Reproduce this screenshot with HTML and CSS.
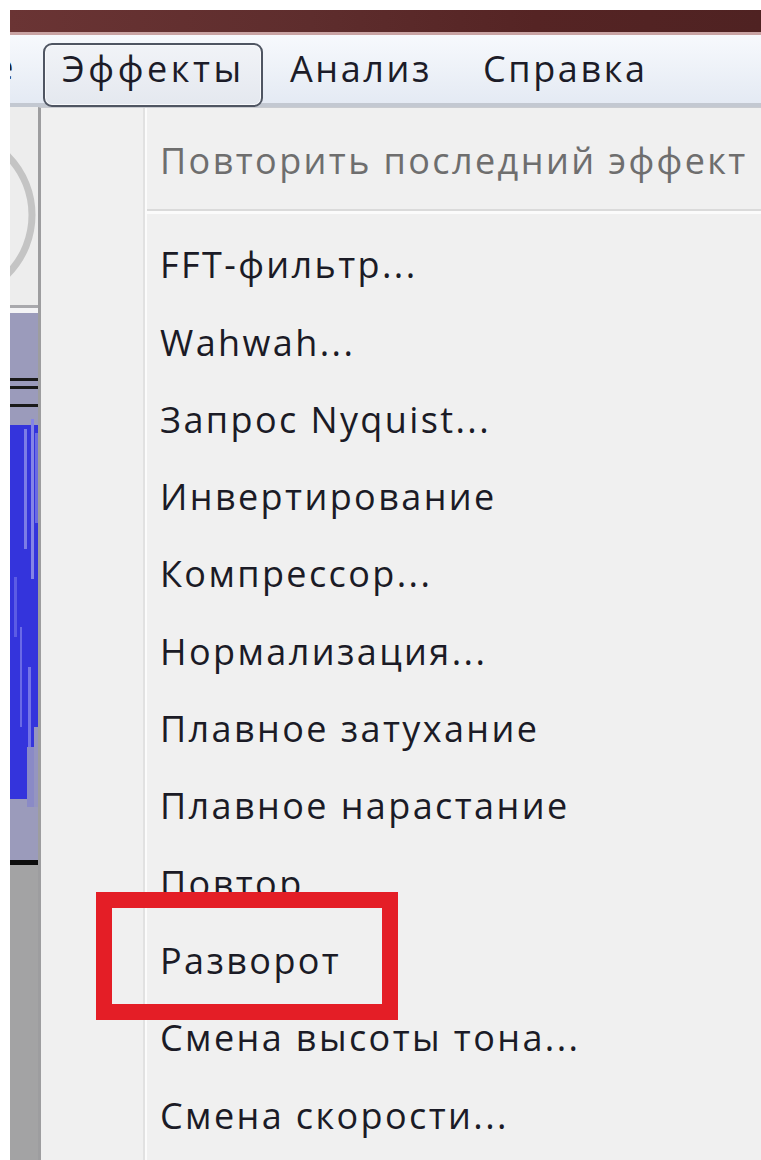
FILE: index.html
```html
<!DOCTYPE html>
<html lang="ru">
<head>
<meta charset="utf-8">
<title>Эффекты</title>
<link rel="stylesheet" href="styles.css">
</head>
<body>
<div class="window">
  <div class="titlebar"></div>
  <nav class="menubar">
    <span class="menu-item menu-item--cut"><span>Создание</span></span>
    <span class="menu-item menu-item--open">Эффекты</span>
    <span class="menu-item">Анализ</span>
    <span class="menu-item">Справка</span>
  </nav>
  <div class="workspace">
    <aside class="track">
      <svg class="track-art" width="28" height="1053" viewBox="0 0 28 1053">
        <!-- control panel with a knob rim -->
        <rect x="0" y="0" width="28" height="198" fill="#ededed"/>
        <circle cx="-62" cy="108" r="84" fill="none" stroke="#c4c4c4" stroke-width="7"/>
        <rect x="0" y="198" width="28" height="3" fill="#a9a9ad"/>
        <rect x="0" y="201" width="28" height="5" fill="#f4f4f6"/>
        <!-- track body -->
        <rect x="0" y="206" width="28" height="550" fill="#9b9bbb"/>
        <rect x="0" y="271" width="28" height="3" fill="#1a1a1a"/>
        <rect x="0" y="279" width="28" height="3" fill="#1a1a1a"/>
        <rect x="0" y="297" width="28" height="3" fill="#1a1a1a"/>
        <!-- waveform -->
        <rect x="0" y="318" width="28" height="374" fill="#3434dc"/>
        <rect x="14" y="322" width="3" height="120" fill="#7c7ce6"/>
        <rect x="21" y="312" width="3" height="160" fill="#8484e6"/>
        <rect x="25" y="326" width="3" height="90" fill="#6a6ae2"/>
        <rect x="4" y="470" width="3" height="60" fill="#5c5ce4"/>
        <rect x="10" y="520" width="2" height="100" fill="#6a6ae6"/>
        <rect x="18" y="560" width="3" height="90" fill="#7474e6"/>
        <rect x="17" y="640" width="11" height="60" fill="#8a8ac6"/>
        <rect x="24" y="620" width="4" height="80" fill="#9595c0"/>
        <rect x="0" y="753" width="28" height="5" fill="#0d0d0d"/>
        <rect x="0" y="758" width="28" height="295" fill="#a3a3a4"/>
      </svg>
    </aside>
    <div class="dropdown">
      <div class="dropdown-item dropdown-item--disabled">Повторить последний эффект</div>
      <div class="dropdown-sep"></div>
      <div class="dropdown-item">FFT-фильтр...</div>
      <div class="dropdown-item">Wahwah...</div>
      <div class="dropdown-item">Запрос Nyquist...</div>
      <div class="dropdown-item">Инвертирование</div>
      <div class="dropdown-item">Компрессор...</div>
      <div class="dropdown-item">Нормализация...</div>
      <div class="dropdown-item">Плавное затухание</div>
      <div class="dropdown-item">Плавное нарастание</div>
      <div class="dropdown-item">Повтор</div>
      <div class="dropdown-item dropdown-item--marked">Разворот<span class="mark"></span></div>
      <div class="dropdown-item">Смена высоты тона...</div>
      <div class="dropdown-item">Смена скорости...</div>
    </div>
  </div>
</div>
</body>
</html>
```

FILE: styles.css
```css
html, body {
  margin: 0;
  padding: 0;
  background: #ffffff;
}

body {
  font-family: "Open Sans", "Noto Sans", "DejaVu Sans", sans-serif;
  font-weight: 500;
  overflow: hidden;
}

.window {
  margin: 10px 0 0 10px;
  height: 1150px;
  overflow: hidden;
  display: flex;
  flex-direction: column;
}

.titlebar {
  height: 22px;
  flex: none;
  background: linear-gradient(90deg, #6a3434 0%, #5e2d2d 40%, #552424 70%, #4f2222 100%);
  border-bottom: 3px solid #c9a3a3;
}

.menubar {
  height: 72px;
  flex: none;
  display: flex;
  align-items: flex-start;
  overflow: hidden;
  background: linear-gradient(180deg, #f7f9fd 0%, #eef2f8 45%, #e3e9f3 100%);
  box-shadow: inset 0 -4px 0 #c3c8d1;
  font-size: 36px;
  letter-spacing: 2.6px;
  color: #1c1c28;
}

.menu-item {
  flex: none;
  height: 64px;
  line-height: 47px;
  padding: 0 22px 0 25px;
  margin-top: 8px;
  box-sizing: border-box;
  border: 2px solid transparent;
  border-radius: 9px;
  white-space: nowrap;
}

/* neighbouring menu, scrolled mostly out of view */
.menu-item--cut {
  width: 6px;
  padding: 0;
  border: 0;
  display: flex;
  justify-content: flex-end;
  overflow: hidden;
}

.menu-item--open {
  margin-left: 27px;
  width: 220px;
  padding-left: 17px;
  letter-spacing: 3.6px;
  border-color: #4f5562;
  background: linear-gradient(180deg, #f1f3f7 0%, #e4e8ef 100%);
  box-shadow: inset 0 0 0 1px #f8f9fb;
}

.workspace {
  flex: 1;
  display: flex;
  min-height: 0;
}

.track {
  flex: none;
  width: 28px;
}

.track-art {
  display: block;
}

.dropdown {
  flex: 1;
  position: relative;
  background: #f0f0f0;
  border-left: 3px solid #9d9d9f;
  border-top: 1px solid #c9cbd0;
  padding-top: 14px;
  font-size: 36px;
  letter-spacing: 2.4px;
  color: #1b1b26;
}

/* icon gutter divider */
.dropdown::before {
  content: "";
  position: absolute;
  top: 0;
  bottom: 0;
  left: 102px;
  width: 2px;
  background: #e1e1e1;
  border-right: 2px solid #fbfbfb;
}

.dropdown-item {
  position: relative;
  height: 77.3px;
  line-height: 77px;
  padding-left: 119px;
  white-space: nowrap;
}

.dropdown-item--disabled {
  color: #6e6e6e;
}

.dropdown-sep {
  height: 27px;
  margin-left: 106px;
  background: linear-gradient(180deg, transparent 0 10px, #dadada 10px 12px, #fbfbfb 12px 15px, transparent 15px);
}

.mark {
  position: absolute;
  z-index: 2;
  left: 55px;
  top: -30px;
  width: 302px;
  height: 128px;
  box-sizing: border-box;
  border: 16px solid #e41e26;
}
```
